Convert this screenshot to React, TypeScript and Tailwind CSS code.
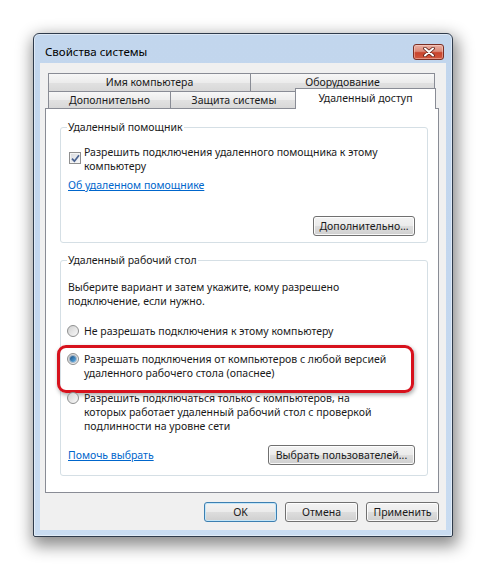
import React from 'react';

const btnBase =
  'h-[20px] rounded-[3px] border text-[10.5px] leading-none text-[#1a1a1a] flex items-center justify-center bg-[linear-gradient(#f3f3f3_0%,#ebebeb_48%,#dddddd_52%,#cfcfcf_100%)]';

const Button: React.FC<{ className?: string; primary?: boolean; children: React.ReactNode }> = ({
  className = '',
  primary,
  children,
}) => (
  <div
    className={`${btnBase} ${
      primary
        ? 'border-[#3c7fb1] shadow-[inset_0_0_0_1px_#c4e6f8]'
        : 'border-[#707070] shadow-[inset_0_0_0_1px_rgba(255,255,255,0.85)]'
    } ${className}`}
  >
    {children}
  </div>
);

const Radio: React.FC<{ checked?: boolean }> = ({ checked }) => (
  <div className="w-[12px] h-[12px] shrink-0 rounded-full border border-[#8e8f8f] bg-linear-to-br from-[#d0d0d0] to-[#fafafa] flex items-center justify-center">
    {checked && (
      <div className="w-[6px] h-[6px] rounded-full bg-linear-to-br from-[#1b4f82] to-[#5fb2ea] shadow-[0_0_0_1px_rgba(40,90,140,0.35)]" />
    )}
  </div>
);

const Checkbox: React.FC = () => (
  <div className="w-[12px] h-[12px] shrink-0 border border-[#8f8f8f] bg-linear-to-br from-[#d6d8dc] to-[#fbfbfb] shadow-[inset_0_0_0_1px_#f4f4f4] flex items-center justify-center">
    <svg width="9" height="9" viewBox="0 0 9 9">
      <path d="M1 4.6 L3.4 7.2 L8 1.2" fill="none" stroke="#4a6391" strokeWidth="1.7" />
    </svg>
  </div>
);

const Tab: React.FC<{ className?: string; children: React.ReactNode }> = ({ className = '', children }) => (
  <div
    className={`border-t border-x border-[#898c95] flex items-center justify-center text-[10.5px] leading-none text-[#1a1a1a] bg-[linear-gradient(#f7f7f7_0%,#ececec_50%,#e1e1e1_52%,#d8d8d8_100%)] ${className}`}
  >
    {children}
  </div>
);

export default function App() {
  return (
    <div className="w-[486px] h-[571px] bg-white overflow-hidden pl-[33px] pt-[33px] font-['Noto_Sans',sans-serif] text-[#1a1a1a]">
      <div className="w-[420px] h-[504px] rounded-t-[6px] rounded-b-[2px] border border-[#2f3b4b] bg-linear-to-b from-[#c2d6ed] via-[#c3d7ef] to-[#c9dcf1] shadow-[2px_6px_16px_3px_rgba(0,0,0,0.45),inset_0_0_0_1px_rgba(255,255,255,0.45)] flex flex-col">
        {/* title bar */}
        <div className="h-[29px] shrink-0 flex items-center justify-between pl-[11px] pr-[8px] pt-[6px]">
          <span className="text-[11.5px] leading-none text-black">Свойства системы</span>
          <div className="w-[31px] h-[16px] rounded-[3px] border border-[#7a2e24] bg-[linear-gradient(#eab0a4_0%,#dc8a79_45%,#c9432c_55%,#d0583f_100%)] shadow-[inset_0_0_0_1px_rgba(255,220,210,0.45)] flex items-center justify-center">
            <svg width="12" height="10" viewBox="0 0 12 10">
              <path d="M2 1.5 L10 8.5 M10 1.5 L2 8.5" stroke="#5b1d15" strokeWidth="3.6" strokeLinecap="round" />
              <path d="M2 1.5 L10 8.5 M10 1.5 L2 8.5" stroke="#ffffff" strokeWidth="2" strokeLinecap="round" />
            </svg>
          </div>
        </div>

        {/* client area */}
        <div className="flex-1 mx-[6px] mb-[6px] bg-[#f0f0f0] pt-[10px] pl-[5px] pr-[7px] flex flex-col">
          {/* tabs */}
          <div className="ml-[3px] flex h-[18px]">
            <Tab className="w-[203px] h-[18px]">Имя компьютера</Tab>
            <Tab className="w-[185px] h-[18px] -ml-px">Оборудование</Tab>
          </div>
          <div className="ml-[3px] flex items-end h-[17px]">
            <Tab className="w-[123px] h-[17px]">Дополнительно</Tab>
            <Tab className="w-[128px] h-[17px] -ml-px">Защита системы</Tab>
            <div className="relative z-10 w-[141px] h-[21px] -ml-[3px] -mb-px border-t border-x border-[#898c95] bg-white flex items-center justify-center text-[10.5px] leading-none pb-[1px]">
              Удаленный доступ
            </div>
          </div>

          {/* panel */}
          <div className="h-[385px] border border-[#898c95] bg-white pl-[14px] pr-[10px] flex flex-col text-[10.5px] leading-[14px]">
            <fieldset className="mt-[11px] border border-[#d5dfe5] rounded-[3px] px-[6px] pb-[6px]">
              <legend className="px-[1px] leading-[14px]">Удаленный помощник</legend>
              <div className="mt-[11px] flex items-start">
                <div className="ml-[2px] mt-[7px]">
                  <Checkbox />
                </div>
                <div className="ml-[3px]">
                  Разрешить подключения удаленного помощника к этому
                  <br />
                  компьютеру
                </div>
              </div>
              <div className="mt-[5px] ml-[1px] text-[#0066cc] underline">Об удаленном помощнике</div>
              <div className="mt-[24px] flex justify-end pr-[6px]">
                <Button className="w-[102px]">Дополнительно...</Button>
              </div>
            </fieldset>

            <fieldset className="mt-[10px] border border-[#d5dfe5] rounded-[3px] px-[6px] pb-[10px]">
              <legend className="px-[1px] leading-[14px]">Удаленный рабочий стол</legend>
              <div className="mt-[13px] ml-[1px]">
                Выберите вариант и затем укажите, кому разрешено
                <br />
                подключение, если нужно.
              </div>
              <div className="mt-[16px] flex items-center">
                <Radio />
                <span className="ml-[5px]">Не разрешать подключения к этому компьютеру</span>
              </div>
              <div className="mt-[7px] -ml-[10px] mr-[7px] border-[3px] border-[#d7121d] rounded-[9px] pl-[7px] pt-[4px] pb-[10px] shadow-[1px_2px_4px_rgba(0,0,0,0.35)] flex items-start">
                <div className="h-[14px] flex items-center">
                  <Radio checked />
                </div>
                <span className="ml-[5px]">
                  Разрешать подключения от компьютеров с любой версией
                  <br />
                  удаленного рабочего стола (опаснее)
                </span>
              </div>
              <div className="-mt-[2px] flex items-start">
                <div className="h-[14px] flex items-center">
                  <Radio />
                </div>
                <span className="ml-[5px]">
                  Разрешить подключаться только с компьютеров, на
                  <br />
                  которых работает удаленный рабочий стол с проверкой
                  <br />
                  подлинности на уровне сети
                </span>
              </div>
              <div className="mt-[12px] flex items-center justify-between pr-[6px]">
                <span className="ml-[1px] text-[#0066cc] underline">Помочь выбрать</span>
                <Button className="w-[147px]">Выбрать пользователей...</Button>
              </div>
            </fieldset>
          </div>

          {/* dialog buttons */}
          <div className="mt-[9px] flex justify-end gap-[8px]">
            <Button primary className="w-[73px]">
              OK
            </Button>
            <Button className="w-[73px]">Отмена</Button>
            <Button className="w-[73px]">Применить</Button>
          </div>
        </div>
      </div>
    </div>
  );
}
